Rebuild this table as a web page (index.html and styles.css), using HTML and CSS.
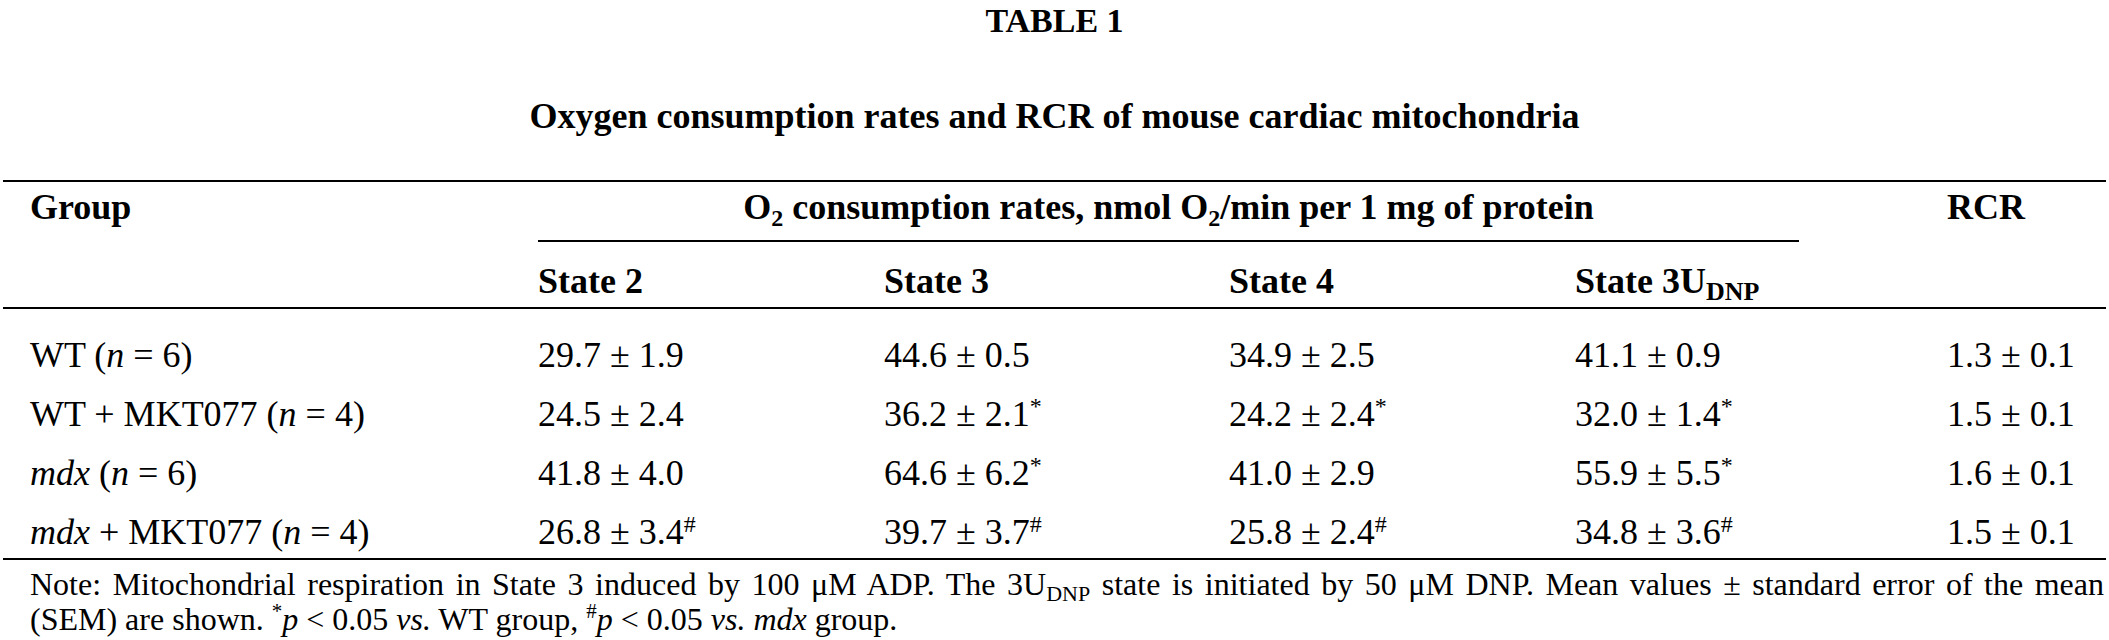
FILE: index.html
```html
<!DOCTYPE html>
<html lang="en">
<head>
<meta charset="utf-8">
<title>Table 1</title>
<link rel="stylesheet" href="styles.css">
</head>
<body>
<div class="label">TABLE 1</div>
<div class="title">Oxygen consumption rates and RCR of mouse cardiac mitochondria</div>

<div class="table">
  <div class="thead">
    <div class="cell group-h">Group</div>
    <div class="cell o2-h">O<sub class="sub">2</sub> consumption rates, nmol O<sub class="sub">2</sub>/min per 1 mg of protein</div>
    <div class="cell rcr-h">RCR</div>
    <div class="cell state c2">State 2</div>
    <div class="cell state c3">State 3</div>
    <div class="cell state c4">State 4</div>
    <div class="cell state c5">State 3U<sub class="sub-b">DNP</sub></div>
  </div>
  <div class="tbody">
    <div class="row">
      <div class="cell first">WT (<i>n</i> = 6)</div>
      <div class="cell">29.7 ± 1.9</div>
      <div class="cell">44.6 ± 0.5</div>
      <div class="cell">34.9 ± 2.5</div>
      <div class="cell">41.1 ± 0.9</div>
      <div class="cell">1.3 ± 0.1</div>
    </div>
    <div class="row">
      <div class="cell first">WT + MKT077 (<i>n</i> = 4)</div>
      <div class="cell">24.5 ± 2.4</div>
      <div class="cell">36.2 ± 2.1<sup class="mark">*</sup></div>
      <div class="cell">24.2 ± 2.4<sup class="mark">*</sup></div>
      <div class="cell">32.0 ± 1.4<sup class="mark">*</sup></div>
      <div class="cell">1.5 ± 0.1</div>
    </div>
    <div class="row">
      <div class="cell first"><i>mdx</i> (<i>n</i> = 6)</div>
      <div class="cell">41.8 ± 4.0</div>
      <div class="cell">64.6 ± 6.2<sup class="mark">*</sup></div>
      <div class="cell">41.0 ± 2.9</div>
      <div class="cell">55.9 ± 5.5<sup class="mark">*</sup></div>
      <div class="cell">1.6 ± 0.1</div>
    </div>
    <div class="row">
      <div class="cell first"><i>mdx</i> + MKT077 (<i>n</i> = 4)</div>
      <div class="cell">26.8 ± 3.4<sup class="mark">#</sup></div>
      <div class="cell">39.7 ± 3.7<sup class="mark">#</sup></div>
      <div class="cell">25.8 ± 2.4<sup class="mark">#</sup></div>
      <div class="cell">34.8 ± 3.6<sup class="mark">#</sup></div>
      <div class="cell">1.5 ± 0.1</div>
    </div>
  </div>
</div>

<div class="note">
  <div class="note-line justify">Note: Mitochondrial respiration in State 3 induced by 100 μM ADP. The 3U<sub class="sub-n">DNP</sub> state is initiated by 50 μM DNP. Mean values ± standard error of the mean</div>
  <div class="note-line">(SEM) are shown. <sup class="mark-n">*</sup><i>p</i> &lt; 0.05 <i>vs.</i> WT group, <sup class="mark-n">#</sup><i>p</i> &lt; 0.05 <i>vs.</i> <i>mdx</i> group.</div>
</div>
</body>
</html>
```

FILE: styles.css
```css
html, body {
  margin: 0;
  padding: 0;
  background: #ffffff;
  color: #000000;
  font-family: "Liberation Serif", "Times New Roman", serif;
  overflow: hidden;
}

.label {
  padding-top: 4px;
  text-align: center;
  font-weight: bold;
  font-size: 34px;
  line-height: 33px;
  height: 33px;
}

.title {
  margin-top: 59px;
  text-align: center;
  font-weight: bold;
  font-size: 36px;
  line-height: 40px;
}

.table {
  margin: 44px 3px 0 3px;
  font-size: 36px;
}

.thead,
.row {
  display: grid;
  grid-template-columns: 535px 346px 345px 346px 372px 1fr;
}

.thead {
  border-top: 2px solid #000;
  border-bottom: 2px solid #000;
  padding-top: 5px;
  font-weight: bold;
}

.cell {
  line-height: 40px;
  white-space: nowrap;
}

.group-h {
  grid-column: 1;
  grid-row: 1;
  padding-left: 27px;
}

.o2-h {
  grid-column: 2 / 6;
  grid-row: 1;
  margin-right: 148px;
  text-align: center;
  padding-bottom: 13px;
  border-bottom: 2px solid #000;
}

.rcr-h {
  grid-column: 6;
  grid-row: 1;
}

.state {
  grid-row: 2;
  padding-top: 19px;
  padding-bottom: 6px;
}

.c2 { grid-column: 2; }
.c3 { grid-column: 3; }
.c4 { grid-column: 4; }
.c5 { grid-column: 5; }

.tbody {
  display: flex;
  flex-direction: column;
  gap: 19px;
  padding-top: 26px;
  padding-bottom: 6px;
  border-bottom: 2px solid #000;
}

.first {
  padding-left: 27px;
}

.sub {
  font-size: 24px;
  line-height: 0;
  vertical-align: -7px;
}

.sub-b {
  font-size: 26px;
  line-height: 0;
  vertical-align: -7px;
}

.mark {
  font-size: 24px;
  line-height: 0;
  vertical-align: 12px;
}

.note {
  margin: 7px 5px 0 30px;
  font-size: 32px;
}

.note-line {
  line-height: 35px;
  white-space: nowrap;
}

.note-line.justify {
  white-space: normal;
  text-align: justify;
  text-align-last: justify;
}

.sub-n {
  font-size: 22px;
  line-height: 0;
  vertical-align: -6px;
}

.mark-n {
  font-size: 21px;
  line-height: 0;
  vertical-align: 12px;
}
```
